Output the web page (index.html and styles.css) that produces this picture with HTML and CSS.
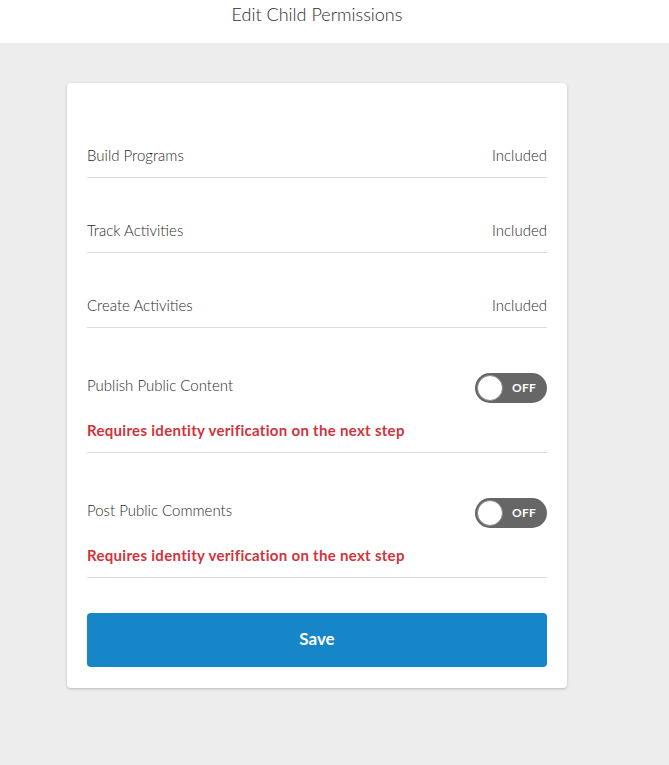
FILE: index.html
```html
<!DOCTYPE html>
<html>
<head>
<meta charset="utf-8">
<link rel="stylesheet" href="styles.css">
</head>
<body>
<header class="topbar">
  <h1 class="title">Edit Child Permissions</h1>
</header>
<main class="page">
  <section class="card">
    <div class="row">
      <span class="label">Build Programs</span>
      <span class="value">Included</span>
    </div>
    <div class="row">
      <span class="label">Track Activities</span>
      <span class="value">Included</span>
    </div>
    <div class="row">
      <span class="label">Create Activities</span>
      <span class="value">Included</span>
    </div>
    <div class="row toggle-row">
      <div class="line">
        <span class="label">Publish Public Content</span>
        <span class="toggle"><span class="knob"></span><span class="toggle-text">OFF</span></span>
      </div>
      <p class="warning">Requires identity verification on the next step</p>
    </div>
    <div class="row toggle-row">
      <div class="line">
        <span class="label">Post Public Comments</span>
        <span class="toggle"><span class="knob"></span><span class="toggle-text">OFF</span></span>
      </div>
      <p class="warning">Requires identity verification on the next step</p>
    </div>
    <button class="save">Save</button>
  </section>
</main>
</body>
</html>
```
FILE: styles.css
```css
* { box-sizing: border-box; }
html, body { margin: 0; padding: 0; }
body {
  background: #ededed;
  font-family: Lato, "Open Sans", "Liberation Sans", sans-serif;
  color: #333;
  height: 765px;
}
.topbar {
  background: #fff;
  height: 43px;
  display: flex;
  justify-content: center;
  padding-right: 35px;
}
.title {
  margin: 3px 0 0;
  font-size: 18px;
  font-weight: 300;
  line-height: 22px;
  color: #2b2b2b;
}
.page {
  padding: 40px 0 0 67px;
}
.card {
  width: 500px;
  background: #fff;
  border-radius: 4px;
  box-shadow: 0 1px 3px rgba(0,0,0,0.22);
  padding: 20px 20px 21px;
}
.row {
  display: flex;
  justify-content: space-between;
  align-items: center;
  padding: 42px 0 12px;
  border-bottom: 1px solid #dcdcdc;
  font-size: 15px;
  line-height: 20px;
  font-weight: 300;
}
.label { color: #2b2b2b; }
.value { color: #2b2b2b; }
.toggle-row {
  display: block;
  padding: 45px 0 12px;
}
.line {
  display: flex;
  justify-content: space-between;
  align-items: center;
  height: 30px;
}
.line .label { position: relative; top: -3px; }
.toggle {
  width: 72px;
  height: 30px;
  border-radius: 15px;
  background: #666;
  display: flex;
  align-items: center;
  padding: 0 2px;
}
.knob {
  width: 26px;
  height: 26px;
  border-radius: 50%;
  background: #fff;
  border: 1px solid #8a8a8a;
}
.toggle-text {
  color: #fff;
  font-weight: 700;
  font-size: 12px;
  margin-left: 9px;
  letter-spacing: 0.3px;
}
.warning {
  margin: 17px 0 0;
  color: #d1333b;
  font-weight: 700;
  font-size: 15px;
  letter-spacing: 0.3px;
  line-height: 20px;
}
.save {
  display: block;
  width: 100%;
  height: 54px;
  margin-top: 35px;
  padding-bottom: 5px;
  border: none;
  border-radius: 4px;
  background: #1686c8;
  color: #fff;
  font-family: Lato, "Open Sans", "Liberation Sans", sans-serif;
  font-weight: 700;
  font-size: 17px;
}
```
